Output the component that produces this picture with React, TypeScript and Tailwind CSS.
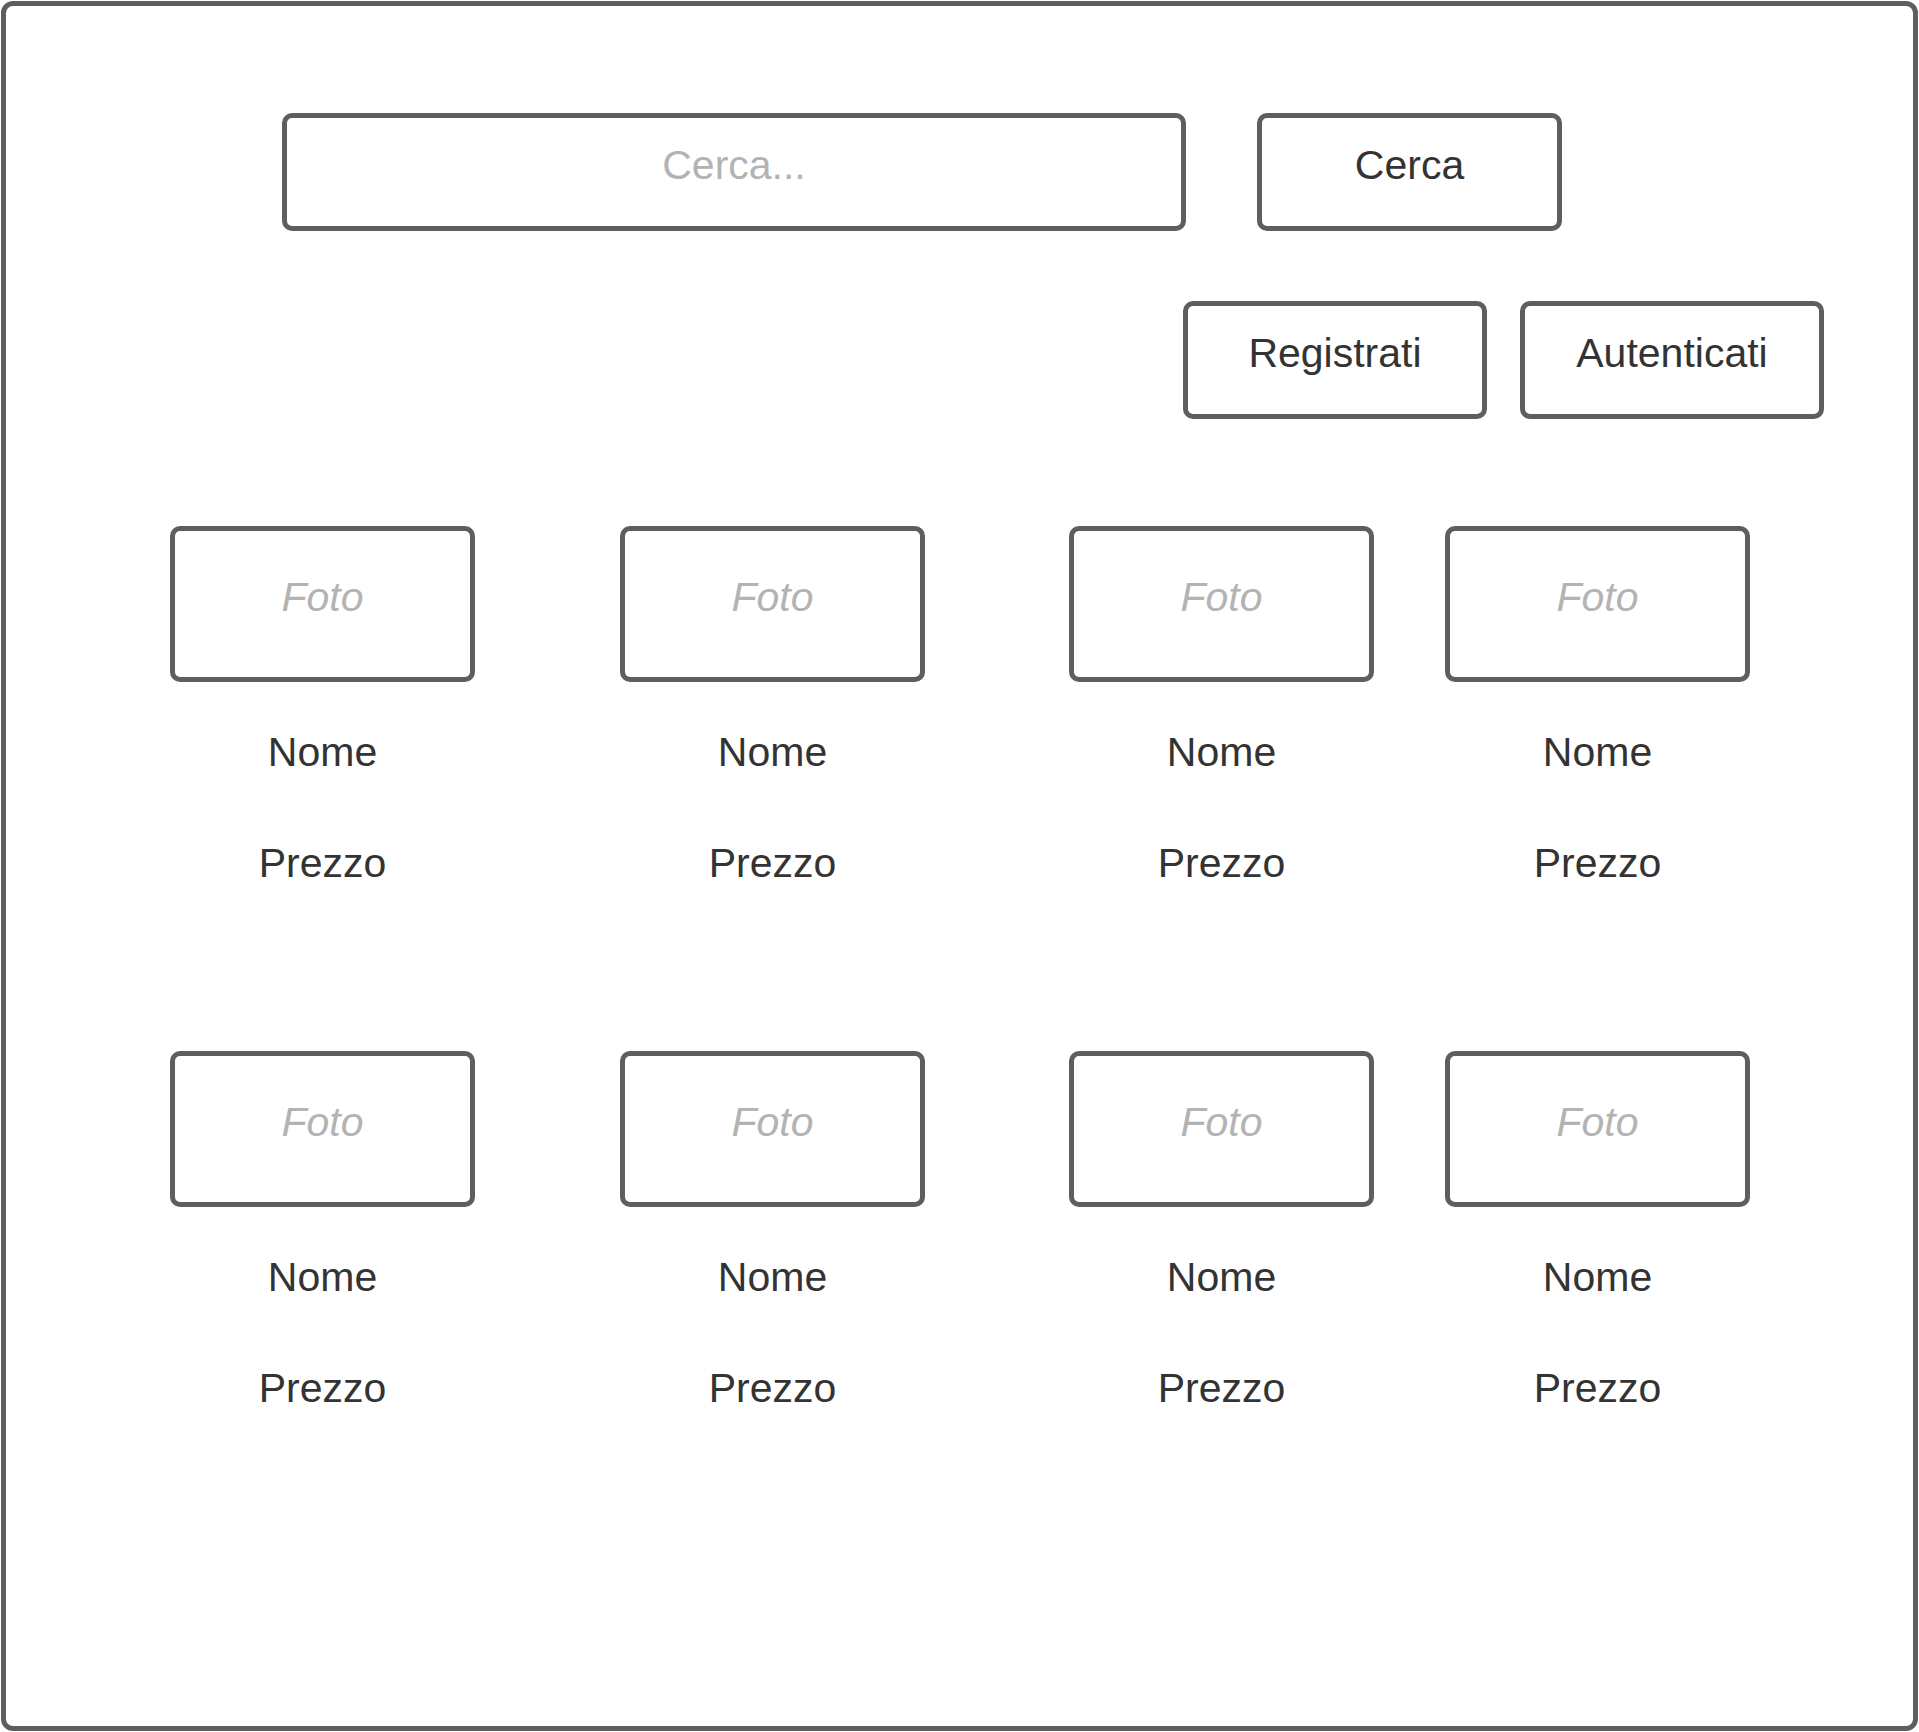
const cols = ["ml-[164px]", "ml-[145px]", "ml-[144px]", "ml-[71px]"];

function Card({ offset }: { offset: string }) {
  return (
    <div className={`${offset} w-[305px] flex flex-col items-center`}>
      <div className="w-[305px] h-[156px] border-[5px] border-[#5e5e5e] rounded-[10px] flex items-center justify-center pb-[13px]">
        <span className="italic text-[#b3b3b3] text-[41px] leading-none">Foto</span>
      </div>
      <p className="mt-[46px] h-[48px] leading-[48px] text-[41px] text-[#333333]">Nome</p>
      <p className="mt-[63px] h-[48px] leading-[48px] text-[41px] text-[#333333]">Prezzo</p>
    </div>
  );
}

function Box({ label, className }: { label: string; className: string }) {
  return (
    <div
      className={`${className} h-[118px] border-[5px] border-[#5e5e5e] rounded-[10px] flex items-center justify-center pb-[12px]`}
    >
      {label}
    </div>
  );
}

export default function App() {
  return (
    <div className="w-full pt-[1px] px-[1px] bg-white font-['Liberation_Sans',Arial,sans-serif]">
      <div className="h-[1730px] border-[5px] border-[#5e5e5e] rounded-[12px]">

        {/* Search */}
        <div className="flex mt-[107px] ml-[276px]">
          <Box label="Cerca..." className="w-[904px] text-[41px] text-[#b3b3b3]" />
          <Box label="Cerca" className="ml-[71px] w-[305px] text-[41px] text-[#333333]" />
        </div>

        {/* Account */}
        <div className="flex mt-[70px] ml-[1177px]">
          <Box label="Registrati" className="w-[304px] text-[41px] text-[#333333]" />
          <Box label="Autenticati" className="ml-[33px] w-[304px] text-[41px] text-[#333333]" />
        </div>

        {/* Products */}
        <div className="flex mt-[107px]">
          {cols.map((c, i) => (
            <Card key={i} offset={c} />
          ))}
        </div>
        <div className="flex mt-[164px]">
          {cols.map((c, i) => (
            <Card key={i} offset={c} />
          ))}
        </div>

      </div>
    </div>
  );
}
